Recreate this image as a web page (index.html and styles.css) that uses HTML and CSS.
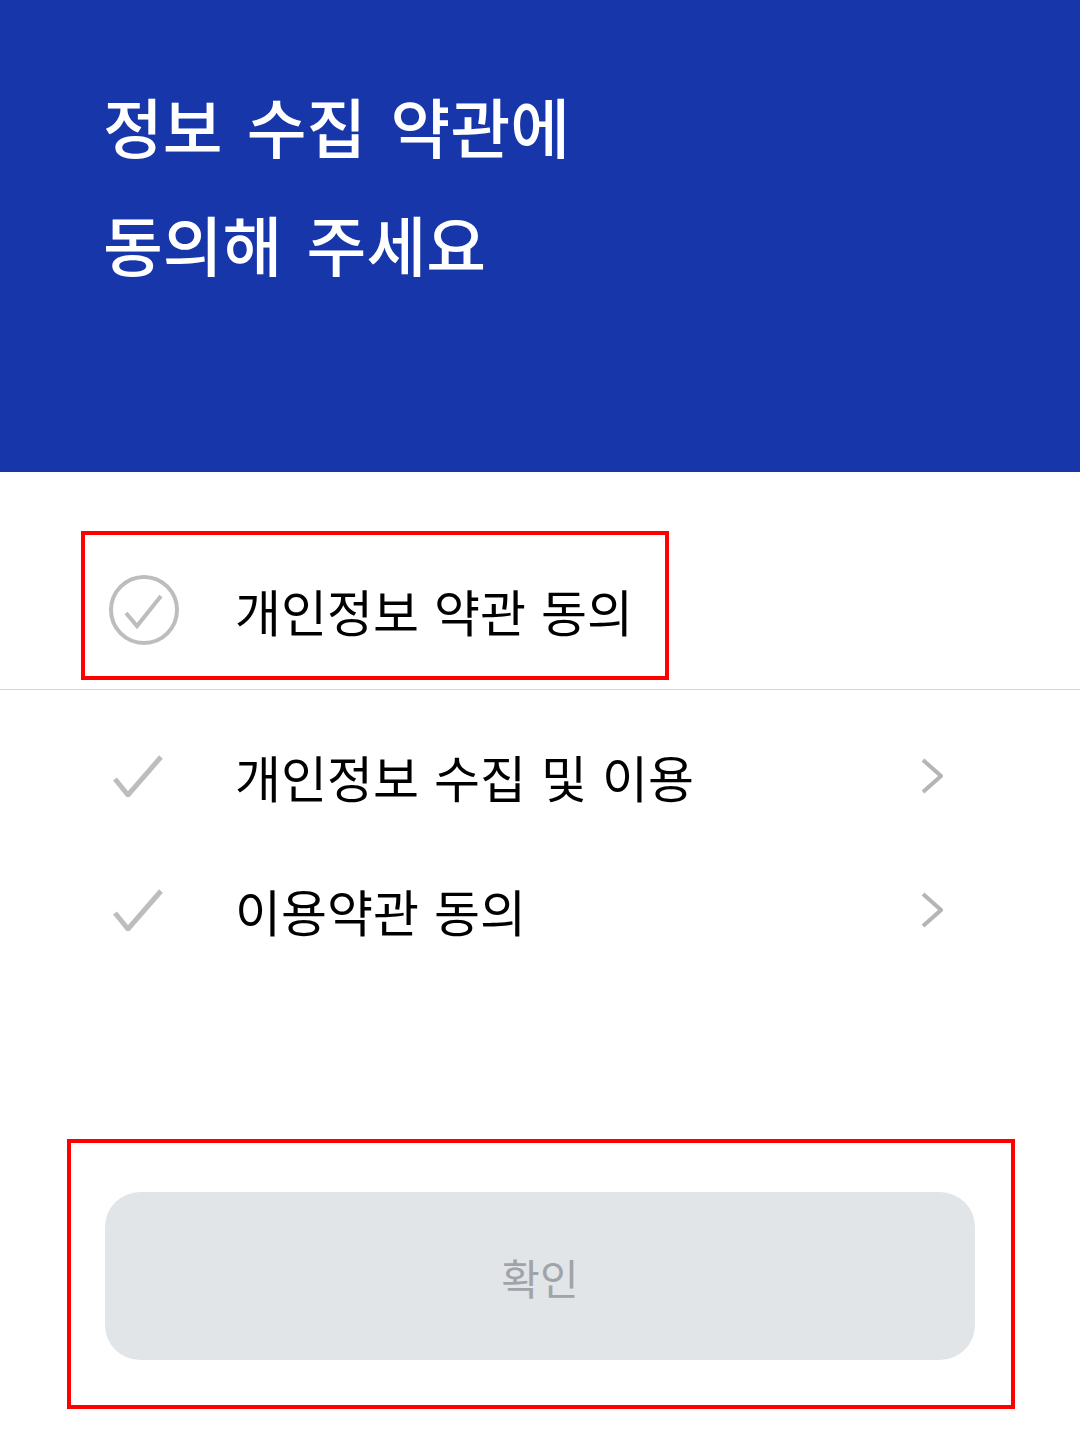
FILE: index.html
```html
<!DOCTYPE html>
<html lang="ko">
<head>
    <meta charset="UTF-8">
    <meta name="viewport" content="width=device-width, initial-scale=1.0">
    <title>약관 동의</title>
    <link rel="stylesheet" href="styles.css">
</head>
<body>
    <div class="screen">
        <header class="hero">
            <h1 class="hero-title">정보 수집 약관에<br>동의해 주세요</h1>
        </header>

        <section class="terms">
            <div class="marked all-agree">
                <svg class="circle-check" width="72" height="72" viewBox="0 0 72 72">
                    <circle cx="36" cy="36" r="33" fill="none" stroke="#bdbdbd" stroke-width="4"/>
                    <polyline points="18,39 29,52 53,22" fill="none" stroke="#bdbdbd" stroke-width="4"/>
                </svg>
                <span class="all-label">개인정보 약관 동의</span>
            </div>

            <hr class="divider">

            <ul class="term-list">
                <li class="term-row">
                    <svg class="check" width="50" height="42" viewBox="0 0 50 42">
                        <polyline points="2,24 15,40 48,2" fill="none" stroke="#bdbdbd" stroke-width="5"/>
                    </svg>
                    <span class="term-label">개인정보 수집 및 이용</span>
                    <svg class="chevron" width="22" height="36" viewBox="0 0 22 36">
                        <polyline points="2,2 20,18 2,34" fill="none" stroke="#b5b5b5" stroke-width="4"/>
                    </svg>
                </li>
                <li class="term-row">
                    <svg class="check" width="50" height="42" viewBox="0 0 50 42">
                        <polyline points="2,24 15,40 48,2" fill="none" stroke="#bdbdbd" stroke-width="5"/>
                    </svg>
                    <span class="term-label">이용약관 동의</span>
                    <svg class="chevron" width="22" height="36" viewBox="0 0 22 36">
                        <polyline points="2,2 20,18 2,34" fill="none" stroke="#b5b5b5" stroke-width="4"/>
                    </svg>
                </li>
            </ul>
        </section>

        <div class="marked footer">
            <button class="confirm" disabled>확인</button>
        </div>
    </div>
</body>
</html>
```

FILE: styles.css
```css
body {
    margin: 0;
    font-family: "Noto Sans CJK KR", "Noto Sans", sans-serif;
    background-color: #fff;
    color: #000;
}
.screen {
    width: 1080px;
}
.hero {
    background-color: #1736a9;
    height: 472px;
    box-sizing: border-box;
    padding: 66px 0 0 103px;
}
.hero-title {
    margin: 0;
    color: #fff;
    font-size: 65px;
    font-weight: 500;
    line-height: 118px;
    word-spacing: 6px;
}
.marked {
    border: 4px solid #ff0000;
    box-sizing: border-box;
}
.all-agree {
    margin: 59px 0 0 81px;
    width: 588px;
    height: 149px;
    display: flex;
    align-items: center;
    padding: 8px 0 0 23px;
}
.circle-check {
    flex-shrink: 0;
}
.all-label {
    margin-left: 55px;
    font-size: 50px;
    word-spacing: 1px;
}
.divider {
    margin: 9px 0 0;
    border: 0;
    border-top: 1px solid #d4d4d4;
    height: 0;
}
.term-list {
    list-style: none;
    margin: 0;
    padding: 19px 0 0;
}
.term-row {
    height: 134px;
    display: flex;
    align-items: center;
    padding: 0 137px 0 113px;
}
.term-label {
    margin-left: 72px;
    font-size: 50px;
    word-spacing: 1px;
}
.chevron {
    margin-left: auto;
}
.footer {
    margin: 162px 0 0 67px;
    width: 948px;
    height: 270px;
    padding: 49px 0 0 34px;
}
.confirm {
    display: block;
    width: 870px;
    height: 168px;
    border: none;
    border-radius: 35px;
    background-color: #e1e5e8;
    color: #a0a4a9;
    font-family: inherit;
    font-size: 42px;
}
```
